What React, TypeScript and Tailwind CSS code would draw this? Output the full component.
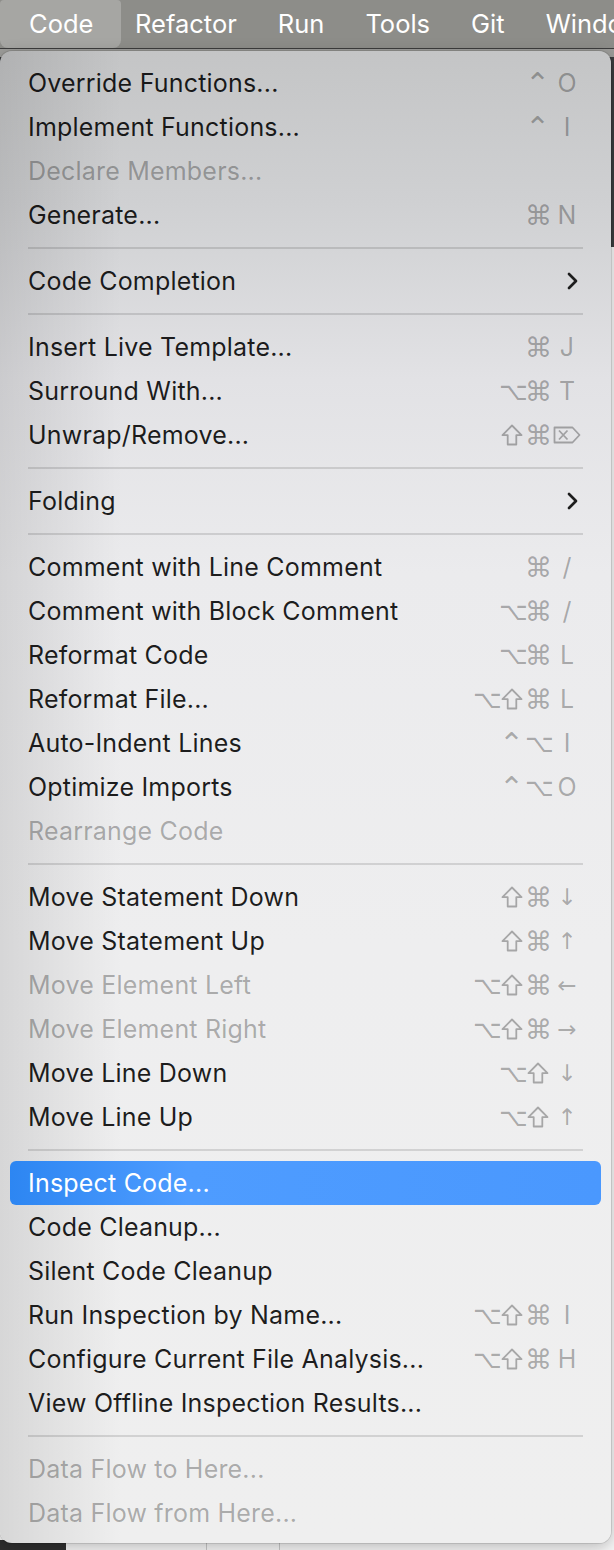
import React from "react";

type Item =
  | { kind: "sep" }
  | {
      kind: "item";
      label: string;
      mods?: string[];
      keyChar?: string;
      disabled?: boolean;
      sub?: boolean;
      active?: boolean;
    };

const S: Item = { kind: "sep" };
const it = (
  label: string,
  mods?: string[],
  keyChar?: string,
  extra: { disabled?: boolean; sub?: boolean; active?: boolean } = {}
): Item => ({ kind: "item", label, mods, keyChar, ...extra });

const items: Item[] = [
  it("Override Functions...", ["⌃"], "O"),
  it("Implement Functions...", ["⌃"], "I"),
  it("Declare Members...", undefined, undefined, { disabled: true }),
  it("Generate...", ["⌘"], "N"),
  S,
  it("Code Completion", undefined, undefined, { sub: true }),
  S,
  it("Insert Live Template...", ["⌘"], "J"),
  it("Surround With...", ["⌥", "⌘"], "T"),
  it("Unwrap/Remove...", ["⇧", "⌘"], "⌦"),
  S,
  it("Folding", undefined, undefined, { sub: true }),
  S,
  it("Comment with Line Comment", ["⌘"], "/"),
  it("Comment with Block Comment", ["⌥", "⌘"], "/"),
  it("Reformat Code", ["⌥", "⌘"], "L"),
  it("Reformat File...", ["⌥", "⇧", "⌘"], "L"),
  it("Auto-Indent Lines", ["⌃", "⌥"], "I"),
  it("Optimize Imports", ["⌃", "⌥"], "O"),
  it("Rearrange Code", undefined, undefined, { disabled: true }),
  S,
  it("Move Statement Down", ["⇧", "⌘"], "↓"),
  it("Move Statement Up", ["⇧", "⌘"], "↑"),
  it("Move Element Left", ["⌥", "⇧", "⌘"], "←", { disabled: true }),
  it("Move Element Right", ["⌥", "⇧", "⌘"], "→", { disabled: true }),
  it("Move Line Down", ["⌥", "⇧"], "↓"),
  it("Move Line Up", ["⌥", "⇧"], "↑"),
  S,
  it("Inspect Code...", undefined, undefined, { active: true }),
  it("Code Cleanup..."),
  it("Silent Code Cleanup"),
  it("Run Inspection by Name...", ["⌥", "⇧", "⌘"], "I"),
  it("Configure Current File Analysis...", ["⌥", "⇧", "⌘"], "H"),
  it("View Offline Inspection Results..."),
  S,
  it("Data Flow to Here...", undefined, undefined, { disabled: true }),
  it("Data Flow from Here...", undefined, undefined, { disabled: true }),
];

function Chevron() {
  return (
    <svg width="14" height="20" viewBox="0 0 14 20" className="shrink-0 text-[#1d1d1d]">
      <polyline
        points="4,3 11,10 4,17"
        fill="none"
        stroke="currentColor"
        strokeWidth="2.7"
        strokeLinecap="round"
        strokeLinejoin="round"
      />
    </svg>
  );
}

function ShiftIcon() {
  return (
    <svg width="22" height="22" viewBox="0 0 22 22" className="inline-block shrink-0">
      <path
        d="M11 1.5 L20.5 11.2 H15.3 V20.5 H6.7 V11.2 H1.5 Z"
        fill="none"
        stroke="currentColor"
        strokeWidth="1.8"
        strokeLinejoin="round"
      />
    </svg>
  );
}

function DeleteIcon() {
  return (
    <svg width="28" height="18" viewBox="0 0 28 18" className="inline-block shrink-0">
      <path
        d="M1.5 1.5 H19.5 L26.5 9 L19.5 16.5 H1.5 Z"
        fill="none"
        stroke="currentColor"
        strokeWidth="1.8"
        strokeLinejoin="round"
      />
      <path d="M6 4.5 L14.5 13.5 M14.5 4.5 L6 13.5" stroke="currentColor" strokeWidth="1.8" />
    </svg>
  );
}

function Mod({ m }: { m: string }) {
  if (m === "⇧")
    return (
      <span className="w-[26px] flex justify-center">
        <ShiftIcon />
      </span>
    );
  if (m === "⌘")
    return (
      <span className="w-[26px] text-center font-['DejaVu_Sans',sans-serif] text-[27px]">{m}</span>
    );
  if (m === "⌥")
    return (
      <span className="w-[26px] text-center font-['DejaVu_Sans',sans-serif] text-[25px]">{m}</span>
    );
  return (
    <span className="w-[26px] text-right pr-[1px] font-['DejaVu_Sans',sans-serif] text-[30px] leading-none translate-y-[1px]">
      {m}
    </span>
  );
}

function Row({ item }: { item: Extract<Item, { kind: "item" }> }) {
  const textColor = item.active
    ? "text-white"
    : item.disabled
    ? "text-black/30"
    : "text-black/[0.88]";
  return (
    <div
      className={
        "mx-[10px] h-[44px] flex items-center pl-[18px] pr-[22px] rounded-[6px] " +
        (item.active ? "bg-[linear-gradient(to_right,#2d86f2,#4e9cff_30%,#4a98fe)]" : "")
      }
    >
      <span className={"flex-1 text-[25px] leading-none tracking-[0.2px] " + textColor}>
        {item.label}
      </span>
      {item.sub && (
        <span className="w-[24px] flex justify-end">
          <Chevron />
        </span>
      )}
      {item.keyChar && (
        <span className="flex items-center text-black/30 text-[25px] leading-none">
          <span className="flex items-center">
            {item.mods?.map((m, i) => (
              <Mod key={i} m={m} />
            ))}
          </span>
          <span
            className={
              "ml-[4px] w-[24px] flex justify-center overflow-visible " +
              ("↓↑←→".includes(item.keyChar) ? "font-['DejaVu_Sans',sans-serif] text-[23px]" : "")
            }
          >
            {item.keyChar === "⌦" ? <DeleteIcon /> : item.keyChar}
          </span>
        </span>
      )}
    </div>
  );
}

export default function App() {
  return (
    <div className="w-[614px] h-[1550px] overflow-hidden font-['Inter','Liberation_Sans',sans-serif] bg-[#f2f2f2]">
      {/* menu bar */}
      <div className="h-[48px] bg-[#8d8d89] flex items-stretch text-white text-[25.5px] border-b border-[#3d3d3d] box-content overflow-hidden">
        <div className="w-[121px] shrink-0 rounded-b-[8px] rounded-t-[4px] bg-[#a6a6a3] flex items-center pl-[29px]">
          Code
        </div>
        <div className="flex shrink-0 items-center gap-[41px] pl-[14px] whitespace-nowrap">
          <span>Refactor</span>
          <span>Run</span>
          <span>Tools</span>
          <span>Git</span>
          <span>Window</span>
        </div>
      </div>
      {/* editor behind + menu */}
      <div className="relative h-[1501px] bg-[#f6f6f6]">
        <div className="h-[8px] bg-[#9c9c99]" />
        <div className="h-[190px] bg-[#3b3d3f]" />
        <div className="absolute left-0 bottom-0 w-[66px] h-[10px] bg-[#2f2f2f]" />
        <div className="absolute left-[206px] bottom-0 w-px h-[10px] bg-[#c8c8c8]" />
        <div className="absolute left-[279px] bottom-0 w-px h-[10px] bg-[#c8c8c8]" />

        <div className="absolute left-0 top-[2px] w-[611px] h-[1492px] rounded-[12px] overflow-hidden shadow-[0_4px_16px_rgba(0,0,0,0.25)] ring-1 ring-black/10 bg-[image:linear-gradient(to_right,rgba(0,0,0,0.1),rgba(0,0,0,0)_20%),linear-gradient(to_bottom,#c4c5c6,#cfd0d2_10%,#e2e2e5_22%,#ebebed_35%,#eeeeef_60%,#efefef)] pt-[10px]">
          {items.map((item, i) =>
            item.kind === "sep" ? (
              <div key={i} className="h-[22px] flex items-center px-[28px]">
                <div className="h-[2px] w-full bg-black/[0.12]" />
              </div>
            ) : (
              <Row key={i} item={item} />
            )
          )}
        </div>
      </div>
    </div>
  );
}
